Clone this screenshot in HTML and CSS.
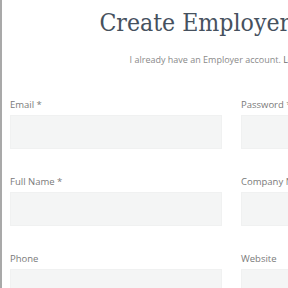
FILE: index.html
```html
<!DOCTYPE html>
<html>
<head>
<meta charset="utf-8">
<link rel="stylesheet" href="styles.css">
</head>
<body>
<div class="page">
  <div class="container">
    <h1 class="title">Create Employer Account</h1>
    <p class="subtitle">I already have an Employer account. <a href="#">Log in to continue</a></p>
    <form class="grid">
      <div class="field"><label>Email *</label><div class="input"></div></div>
      <div class="field"><label>Password *</label><div class="input"></div></div>
      <div class="field"><label>Full Name *</label><div class="input"></div></div>
      <div class="field"><label>Company Name *</label><div class="input"></div></div>
      <div class="field"><label>Phone</label><div class="input"></div></div>
      <div class="field"><label>Website</label><div class="input"></div></div>
    </form>
  </div>
</div>
</body>
</html>
```
FILE: styles.css
```css
html, body {
  margin: 0;
  padding: 0;
  background: #fff;
  overflow: hidden;
}
.page {
  border-left: 2px solid #a9a9a9;
  min-height: 288px;
  padding-left: 8px;
  width: 600px;
}
.container {
  width: 468px;
}
.title {
  margin: 0;
  padding-top: 6px;
  font-family: "DejaVu Serif Condensed", "DejaVu Serif", serif;
  font-weight: normal;
  font-size: 24.6px;
  line-height: 34px;
  color: #46515e;
  text-align: center;
  white-space: nowrap;
}
.subtitle {
  margin: 14px 0 0;
  font-family: "Open Sans", sans-serif;
  font-size: 9px;
  line-height: 12px;
  color: #8a8a8a;
  text-align: center;
  white-space: nowrap;
}
.subtitle a {
  color: #6f6f6f;
  text-decoration: none;
}
.grid {
  display: grid;
  grid-template-columns: 212px 212px;
  column-gap: 19px;
  row-gap: 27px;
  margin-top: 33px;
}
.field label {
  display: block;
  font-family: "Open Sans", sans-serif;
  font-size: 9.5px;
  line-height: 12px;
  color: #7a7a7a;
  margin-bottom: 4px;
}
.input {
  background: #f4f5f5;
  border: 1px solid #f0f1f1;
  box-sizing: border-box;
  height: 34px;
}
```
